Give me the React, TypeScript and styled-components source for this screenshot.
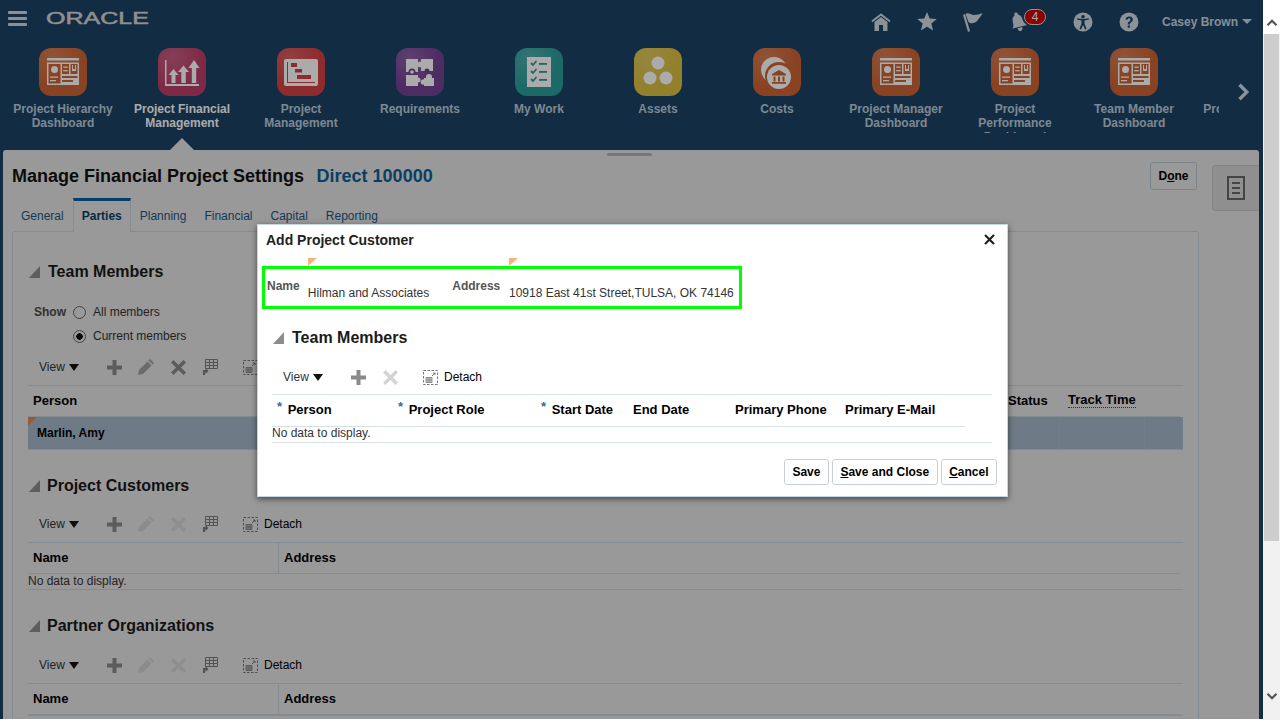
import React from "react";
import styled, { createGlobalStyle } from "styled-components";

const GlobalStyle = createGlobalStyle`
  html, body {
    margin: 0;
    padding: 0;
    background: #fff;
    overflow: hidden;
    font-family: "Liberation Sans", Arial, sans-serif;
    font-size: 12px;
    color: #000;
  }
  * { box-sizing: border-box; }
`;

const Shell = styled.div`
  display: flex;
  width: 1280px;
  height: 720px;
`;

const Page = styled.div`
  position: relative;
  flex: 0 0 1263px;
  height: 719px;
  overflow: hidden;
  background: #1b4265;
  display: flex;
  flex-direction: column;
`;

/* top bar */
const TopBar = styled.header`
  flex: 0 0 42px;
  display: flex;
  align-items: center;
  padding: 0 11px 0 8px;
`;

const Burger = styled.div`
  width: 19px;
  display: flex;
  flex-direction: column;
  gap: 3px;
  margin-top: -6px;

  span {
    height: 3px;
    border-radius: 1px;
    background: #d6d6d6;
  }
`;

const Logo = styled.svg`
  margin: -6px 0 0 19px;
`;

const TopIcons = styled.div`
  margin-left: auto;
  display: flex;
  align-items: center;
  margin-top: 1px;
`;

const IconSlot = styled.div<{ $wide?: boolean }>`
  position: relative;
  width: ${({ $wide }) => ($wide ? "64px" : "46px")};
  display: flex;
  justify-content: ${({ $wide }) => ($wide ? "flex-start" : "center")};
  padding-left: ${({ $wide }) => ($wide ? "14px" : "0")};
`;

const Badge = styled.span`
  position: absolute;
  left: 28px;
  top: -3px;
  width: 22px;
  height: 16px;
  border-radius: 8px;
  border: 1px solid #d8d8d8;
  background: #cf0000;
  color: #fff;
  font-size: 12px;
  line-height: 14px;
  text-align: center;
`;

const UserName = styled.div`
  margin-left: 10px;
  display: flex;
  align-items: center;
  gap: 4px;
  font-weight: bold;
  color: #c8d6e2;
`;

const Caret = styled.span<{ $color?: string }>`
  width: 0;
  height: 0;
  border-left: 5px solid transparent;
  border-right: 5px solid transparent;
  border-top: 5px solid ${({ $color }) => $color || "#c8d6e2"};
`;

/* springboard strip */
const NavRow = styled.nav`
  flex: 0 0 108px;
  display: flex;
  padding: 6px 0 0 3px;
`;

const NavClip = styled.div`
  width: 1216px;
  display: flex;
  overflow: hidden;
`;

const NavItem = styled.div<{ $active?: boolean }>`
  position: relative;
  flex: 0 0 120px;
  margin-right: -1px;
  display: flex;
  flex-direction: column;
  align-items: center;
  color: ${({ $active }) => ($active ? "#fff" : "#bccbd8")};

  ${({ $active }) =>
    $active &&
    `&::after {
      content: "";
      position: absolute;
      left: 48px;
      bottom: 0;
      border-left: 12px solid transparent;
      border-right: 12px solid transparent;
      border-bottom: 12px solid #e4e4e4;
    }`}
`;

const Tile = styled.div<{ $color: string }>`
  width: 48px;
  height: 48px;
  border-radius: 12px;
  background: radial-gradient(circle at 30% 20%, rgba(255, 255, 255, 0.16), transparent 58%),
    ${({ $color }) => $color};
`;

const NavLabel = styled.div`
  margin-top: 6px;
  max-width: 110px;
  height: 31px;
  overflow: hidden;
  text-align: center;
  font-weight: bold;
  font-size: 12px;
  line-height: 14px;
`;

const NavNext = styled.div`
  flex: 1;
  display: flex;
  justify-content: center;
  padding: 35px 0 0 6px;
`;

/* dimmed page */
const Panel = styled.main`
  flex: 1;
  min-height: 0;
  margin: 0 4px 0 3px;
  border-radius: 3px 3px 0 0;
  background: #e4e4e4;
  overflow: hidden;
`;

const Handle = styled.div`
  width: 45px;
  height: 3px;
  margin: 3px 0 0 604px;
  border-radius: 2px;
  background: #b2b2b2;
`;

const PanelBody = styled.div`
  display: flex;
  margin-top: 6px;
`;

const Content = styled.div`
  flex: 0 0 1196px;
  padding-left: 9px;
`;

const TitleRow = styled.div`
  height: 28px;
  display: flex;
  align-items: center;
  justify-content: space-between;
  padding-right: 2px;
`;

const PageTitle = styled.h1`
  margin: 0;
  font-size: 18px;
  font-weight: bold;
  color: #111;

  span {
    margin-left: 12.5px;
    color: #0f5d96;
  }
`;

const Button = styled.button<{ $tall?: boolean }>`
  height: ${({ $tall }) => ($tall ? "28px" : "26px")};
  padding: 0 7.5px;
  border: 1px solid #c5d0da;
  border-radius: 3px;
  background: #fff;
  font: bold 12px "Liberation Sans", Arial, sans-serif;
  color: #000;
`;

const DoneButton = styled(Button)`
  background: #e4e4e4;
  border-color: #b8c4cf;
`;

const Tabs = styled.div`
  height: 33px;
  margin-top: 8px;
  display: flex;
`;

const Tab = styled.div<{ $active?: boolean }>`
  height: ${({ $active }) => ($active ? "34px" : "33px")};
  padding: 8px 8px 0;
  font-size: 12px;
  position: relative;
  color: ${({ $active }) => ($active ? "#0b3f6b" : "#1c5686")};
  font-weight: ${({ $active }) => ($active ? "bold" : "normal")};
  background: ${({ $active }) => ($active ? "#e4e4e4" : "transparent")};
  border-top: 3px solid ${({ $active }) => ($active ? "#0c5aa0" : "transparent")};
  border-left: 1px solid ${({ $active }) => ($active ? "#c3d0dc" : "transparent")};
  border-right: 1px solid ${({ $active }) => ($active ? "#c3d0dc" : "transparent")};
`;

const TabBox = styled.div`
  height: 520px;
  padding: 30px 15px 0;
  border: 1px solid #c3d0dc;
  border-radius: 3px;
`;

const Heading = styled.div<{ $gap?: number; $tight?: boolean }>`
  display: flex;
  align-items: center;
  height: 20px;
  margin-top: ${({ $gap }) => $gap ?? 0}px;
  font-size: 16px;
  font-weight: bold;
  color: #1a1a1a;

  span {
    margin-right: ${({ $tight }) => ($tight ? "7px" : "8px")};
  }
`;

const Disclosure = styled.span`
  width: 11px;
  height: 12px;
  margin-left: 1px;
  background: #8c8c8c;
  clip-path: polygon(100% 0, 100% 100%, 0 100%);
`;

const ShowGroup = styled.div`
  display: grid;
  grid-template-columns: 39px auto;
  grid-auto-rows: 24px;
  width: 220px;
  margin: 18px 0 0 6px;
  align-items: center;
`;

const ShowLabel = styled.span`
  font-weight: bold;
  color: #4a4a4a;
`;

const RadioLine = styled.label`
  grid-column: 2;
  display: flex;
  align-items: center;
  gap: 7px;
  color: #333;
`;

const Radio = styled.span<{ $on?: boolean }>`
  width: 13px;
  height: 13px;
  border-radius: 50%;
  border: 1px solid #666;
  background: radial-gradient(circle, ${({ $on }) => ($on ? "#111 0 3px" : "transparent 0 3px")}, transparent 3.5px);
`;

const Toolbar = styled.div<{ $gap?: number }>`
  height: 36px;
  margin-top: ${({ $gap }) => $gap ?? 11}px;
  padding-left: 11px;
  display: flex;
  align-items: center;
`;

const ViewLabel = styled.span`
  width: 30px;
  color: #333;
`;

const ViewCaret = styled(Caret)`
  margin-right: 19px;
  border-left-width: 5.5px;
  border-right-width: 5.5px;
  border-top-width: 7px;
`;

const ToolSlot = styled.span`
  width: 32px;
  height: 18px;
  display: flex;
  align-items: center;
  justify-content: center;
`;

const Detach = styled.span`
  margin-left: 17px;
  display: flex;
  align-items: center;
  gap: 6px;
  color: #000;
`;

const Table = styled.div`
  border-top: 1px solid #c3d0dc;
  border-bottom: 1px solid #c3d0dc;
`;

const HeadRow = styled.div<{ $cols: string; $inset?: number }>`
  display: grid;
  grid-template-columns: ${({ $cols }) => $cols};
  height: 31px;
  margin-right: ${({ $inset }) => $inset ?? 3}px;
  border-bottom: 1px solid #c3d0dc;
`;

const HeadCell = styled.div<{ $sep?: boolean }>`
  display: flex;
  align-items: center;
  padding: 0 0 2px 5px;
  font-size: 13px;
  font-weight: bold;
  color: #000;
  white-space: nowrap;
  border-right: 1px solid ${({ $sep }) => ($sep ? "#c3d0dc" : "transparent")};
`;

const TrackTime = styled.span`
  border-bottom: 1px dotted #444;
`;

const SelectedRow = styled.div`
  position: relative;
  display: grid;
  grid-template-columns: 1032px 85px 1fr;
  height: 32px;
  background: #a4b8ca;
  font-weight: bold;
  font-size: 12px;

  &::before {
    content: "";
    position: absolute;
    left: 0;
    top: 0;
    border-top: 9px solid #e28a50;
    border-right: 9px solid transparent;
  }
`;

const RowCell = styled.div`
  display: flex;
  align-items: center;
  padding: 0 0 1px 9px;
  border-right: 1px solid #abbdce;
`;

const NoData = styled.div`
  height: 15px;
  line-height: 14px;
  font-size: 12px;
  color: #333;
`;

const SideRail = styled.aside`
  flex: 1;
  padding: 3px 0 0 13px;
`;

const SideTab = styled.div`
  height: 46px;
  display: flex;
  align-items: center;
  justify-content: center;
  background: #d6d6d6;
  border: 1px solid #c4c4c4;
  border-right: none;
  border-radius: 4px 0 0 4px;
`;

/* modal */
const Overlay = styled.div`
  position: absolute;
  inset: 0;
  background: rgba(0, 0, 0, 0.33);
`;

const Dialog = styled.section`
  position: absolute;
  left: 257px;
  top: 224px;
  width: 751px;
  height: 273px;
  background: #fff;
  border: 1px solid #c6d6e3;
  box-shadow: 0 2px 6px rgba(0, 0, 0, 0.55);
`;

const DialogHead = styled.div`
  height: 29px;
  padding: 0 12px 0 8px;
  display: flex;
  align-items: center;
  justify-content: space-between;
  font-size: 14px;
  font-weight: bold;
  color: #222;
`;

const CustomerBox = styled.div`
  width: 480px;
  height: 43px;
  margin: 12px 0 0 4px;
  padding-left: 2px;
  border: 3px solid #00ff00;
  display: flex;
`;

const FieldLabel = styled.span<{ $width: number }>`
  width: ${({ $width }) => $width}px;
  padding-top: 10px;
  font-weight: bold;
  color: #555;
`;

const FieldValue = styled.span<{ $width: number }>`
  position: relative;
  width: ${({ $width }) => $width}px;
  padding-top: 17px;
  color: #333;
  white-space: nowrap;

  &::before {
    content: "";
    position: absolute;
    left: 0;
    top: -11px;
    border-top: 8px solid #fdb07a;
    border-right: 9px solid transparent;
  }
`;

const DialogBody = styled.div`
  padding: 19px 15px 0 14px;
`;

const Required = styled.span`
  margin-right: 5.6px;
  color: #2a6eb0;
  font-size: 13px;
  position: relative;
  top: -3px;
`;

const DialogTable = styled(Table)`
  margin-top: -1px;
  border-color: #d6dfe6;
`;

const DialogHeadRow = styled(HeadRow)`
  height: 32px;
  border-color: #d6dfe6;
`;

const DialogNoData = styled(NoData)`
  height: 15px;
  line-height: 13px;
`;

const DialogFoot = styled.div`
  display: flex;
  justify-content: flex-end;
  gap: 3px;
  margin-top: 16px;
  padding-right: 10px;
`;

/* scrollbar */
const ScrollBar = styled.div`
  flex: 1;
  background: #f1f1f1;
  display: flex;
  flex-direction: column;
`;

const ScrollButton = styled.div<{ $top?: boolean }>`
  height: ${({ $top }) => ($top ? "34px" : "auto")};
  margin-top: ${({ $top }) => ($top ? "0" : "auto")};
  padding: ${({ $top }) => ($top ? "17px 0 0" : "0 0 18px")};
  background: ${({ $top }) => ($top ? "#fff" : "transparent")};
  display: flex;
  justify-content: center;
`;

const ScrollThumb = styled.div`
  height: 507px;
  margin: 0 1px;
  background: #cdcdcd;
`;

/* drawings */
const G = "#fff";

const DashboardGlyph = ({ c }: { c: string }) => (
  <svg width="48" height="48" viewBox="0 0 48 48">
    <rect x="8" y="10" width="32" height="2.5" fill={G} />
    <rect x="8" y="14.5" width="32" height="22.5" fill={G} />
    <rect x="9.5" y="16" width="12" height="19.5" fill={c} />
    <circle cx="15.5" cy="21.5" r="3.5" fill={G} />
    <rect x="11" y="28.5" width="8" height="1.3" fill={G} />
    <rect x="11" y="32" width="6" height="1.3" fill={G} />
    <rect x="23" y="16" width="7" height="10" fill={c} />
    <rect x="24.2" y="18.5" width="4.6" height="1.3" fill={G} />
    <rect x="24.2" y="22" width="4.6" height="1.3" fill={G} />
    <rect x="31.5" y="16" width="7" height="10" fill={c} />
    <path d="M33 17v6h4v-6h-1v4h-2v-4z" fill={G} />
    <rect x="23" y="28" width="15.5" height="2" fill={c} />
    <rect x="23" y="32" width="11" height="2" fill={c} />
  </svg>
);

const FinancialGlyph = () => (
  <svg width="48" height="48" viewBox="0 0 48 48">
    <path d="M7 12h1.500v24H41v2H7z" fill={G} />
    <path d="M10.500 27l5-6 5 6h-3v8h-4v-8z" fill={G} />
    <path d="M20 24l5.500-6.500L31 24h-3.200v11h-4.500V24z" fill={G} />
    <path d="M30.500 20l5.500-8 5.500 8h-3.300v15h-4.400V20z" fill={G} />
  </svg>
);

const GanttGlyph = ({ c }: { c: string }) => (
  <svg width="48" height="48" viewBox="0 0 48 48">
    <rect x="7" y="11" width="34" height="27" rx="2" fill={G} />
    <path d="M10 14h1v20h27v1H10z" fill={c} />
    <rect x="14" y="15" width="6" height="4" fill={c} />
    <rect x="18" y="21" width="7" height="3.5" fill={c} />
    <rect x="20" y="27" width="14" height="4" fill={c} />
  </svg>
);

const PuzzleGlyph = ({ c }: { c: string }) => (
  <svg width="48" height="48" viewBox="0 0 48 48">
    <rect x="10" y="11" width="12" height="13" fill={G} />
    <circle cx="16" cy="24" r="3.5" fill={c} />
    <circle cx="16" cy="24" r="1.8" fill={G} />
    <rect x="25" y="11" width="12" height="12" fill={G} />
    <circle cx="24.500" cy="16.500" r="3" fill={G} />
    <circle cx="31" cy="23" r="2.500" fill={c} />
    <rect x="10" y="27" width="12" height="11" fill={G} />
    <circle cx="22" cy="32" r="2.500" fill={G} />
    <rect x="28" y="30" width="10" height="8" fill={G} />
    <circle cx="33" cy="29" r="3" fill={G} />
    <circle cx="27.500" cy="34" r="2.800" fill={G} />
  </svg>
);

const ChecklistGlyph = ({ c }: { c: string }) => (
  <svg width="48" height="48" viewBox="0 0 48 48">
    <rect x="12" y="9" width="24" height="30" fill={G} />
    {[15, 23, 31].map((y) => (
      <g key={y}>
        <path d={`M16 ${y}l2 2 3.5-4`} stroke={c} strokeWidth="1.8" fill="none" />
        <rect x="24" y={y} width="8" height="1.8" fill={c} />
      </g>
    ))}
  </svg>
);

const AssetsGlyph = () => (
  <svg width="48" height="48" viewBox="0 0 48 48">
    <circle cx="24" cy="15" r="6.5" fill={G} />
    <circle cx="16" cy="30" r="6.5" fill={G} />
    <circle cx="32" cy="30" r="6.5" fill={G} />
  </svg>
);

const CostsGlyph = ({ c }: { c: string }) => (
  <svg width="48" height="48" viewBox="0 0 48 48">
    <circle cx="21" cy="22" r="13" fill={G} />
    <circle cx="26" cy="28" r="14" fill={c} />
    <circle cx="26" cy="29" r="12" fill={G} />
    <path d="M26 22l7 4v1.5H19V26z" fill={c} />
    <rect x="20.5" y="28.5" width="2" height="5" fill={c} />
    <rect x="25" y="28.5" width="2" height="5" fill={c} />
    <rect x="29.5" y="28.5" width="2" height="5" fill={c} />
    <rect x="19" y="34" width="14" height="1.8" fill={c} />
  </svg>
);

const ORANGE = "#ce6433";

const navItems = [
  { label: "Project Hierarchy Dashboard", color: ORANGE, glyph: <DashboardGlyph c={ORANGE} /> },
  { label: "Project Financial Management", color: "#bd3f69", glyph: <FinancialGlyph />, active: true },
  { label: "Project Management", color: "#d44042", glyph: <GanttGlyph c="#d44042" /> },
  { label: "Requirements", color: "#744295", glyph: <PuzzleGlyph c="#744295" /> },
  { label: "My Work", color: "#2a9e9b", glyph: <ChecklistGlyph c="#2a9e9b" /> },
  { label: "Assets", color: "#dabf3f", glyph: <AssetsGlyph /> },
  { label: "Costs", color: ORANGE, glyph: <CostsGlyph c={ORANGE} /> },
  { label: "Project Manager Dashboard", color: ORANGE, glyph: <DashboardGlyph c={ORANGE} /> },
  { label: "Project Performance Dashboard", color: ORANGE, glyph: <DashboardGlyph c={ORANGE} /> },
  { label: "Team Member Dashboard", color: ORANGE, glyph: <DashboardGlyph c={ORANGE} /> },
  { label: "Project Hierarchy Dashboard", color: ORANGE, glyph: <DashboardGlyph c={ORANGE} /> },
];

const ICON = "#cfdbe4";

const HomeIcon = () => (
  <svg width="20" height="18" viewBox="0 0 20 18">
    <path d="M1 8.500L10 1.500l9 7" fill="none" stroke={ICON} strokeWidth="2" />
    <path d="M3.500 9L10 4l6.500 5v9H12v-6H8v6H3.500z" fill={ICON} />
  </svg>
);

const StarIcon = () => (
  <svg width="20" height="19" viewBox="0 0 20 19">
    <path d="M10 0l2.700 6.600 7.100.5-5.500 4.500 1.800 7L10 14.800l-6.100 3.800 1.800-7L.2 7.100l7.100-.5z" fill={ICON} />
  </svg>
);

const FlagIcon = () => (
  <svg width="20" height="20" viewBox="0 0 20 20">
    <path d="M0 3l2-1 5 17-2 1z" fill={ICON} />
    <path d="M2.500 2C5 0 8 3 11 3c3 0 6-1 8.500-2-1 3-3.500 5-5 7.500-2 2.500-5 3-7.500 2.500L5.500 10z" fill={ICON} />
  </svg>
);

const BellIcon = () => (
  <svg width="17" height="20" viewBox="0 0 17 20">
    <g transform="rotate(-14 8 10)">
      <circle cx="8" cy="2" r="1.800" fill={ICON} />
      <path d="M8 2.500c3.500 0 5 3 5 6 0 3 1 4.500 3 6.500H1c2-2 2-3.500 2-6.500 0-3 1.500-6 5-6z" fill={ICON} />
      <path d="M6 16h5c0 2-1 3.500-2.500 3.500S6 18 6 16z" fill={ICON} />
    </g>
  </svg>
);

const AccessIcon = () => (
  <svg width="20" height="20" viewBox="0 0 20 20">
    <circle cx="10" cy="10" r="9.500" fill={ICON} />
    <circle cx="10" cy="4.800" r="1.800" fill="#1b4265" />
    <path d="M4 7.500l4.500 1v3L6.500 17l1.400.5L10 13l2.100 4.500 1.400-.5-2-5.500v-3l4.500-1-.3-1.200c-3.800 1-7.600 1-11.400 0z" fill="#1b4265" />
  </svg>
);

const HelpIcon = () => (
  <svg width="20" height="20" viewBox="0 0 20 20">
    <circle cx="10" cy="10" r="9.500" fill={ICON} />
    <path d="M6.500 7.500C6.800 5.500 8.200 4.500 10.200 4.500c2.200 0 3.600 1.200 3.600 3 0 1.500-.9 2.200-1.900 2.900-.8.600-1.100 1-1.100 2H8.700c0-1.600.5-2.300 1.500-3 .8-.6 1.300-1 1.300-1.800 0-.8-.6-1.300-1.400-1.300-.9 0-1.400.5-1.600 1.500z" fill="#1b4265" />
    <rect x="8.700" y="13.500" width="2.200" height="2.200" fill="#1b4265" />
  </svg>
);

const Chevron = ({ dir, color, size }: { dir: "up" | "down" | "right"; color: string; size: number }) => {
  const d = dir === "right" ? "M4 1.500l6.500 6.500L4 14.500" : dir === "up" ? "M2 11l6-6 6 6" : "M2 5l6 6 6-6";
  return (
    <svg width={size} height={size} viewBox="0 0 16 16">
      <path d={d} fill="none" stroke={color} strokeWidth="3" />
    </svg>
  );
};

const PlusIcon = () => (
  <svg width="15" height="15" viewBox="0 0 15 15">
    <path d="M5.500 0h4v5.500H15v4H9.500V15h-4V9.500H0v-4h5.500z" fill="#8a8a8a" />
  </svg>
);

const PencilIcon = ({ off }: { off?: boolean }) => (
  <svg width="16" height="16" viewBox="0 0 16 16">
    <path d="M12 0l4 4-1.500 1.500-4-4zM9.500 2.500l4 4L5 15l-5 1 1-5z" fill={off ? "#d0d0d0" : "#a0a0a0"} />
  </svg>
);

const CrossIcon = ({ off }: { off?: boolean }) => (
  <svg width="15" height="15" viewBox="0 0 15 15">
    <path d="M2.500 0l5 5 5-5L15 2.500l-5 5 5 5-2.500 2.500-5-5-5 5L0 12.500l5-5-5-5z" fill={off ? "#d4d4d4" : "#8a8a8a"} />
  </svg>
);

const FreezeIcon = () => (
  <svg width="16" height="16" viewBox="0 0 16 16">
    <path d="M3.500.5h12v9h-12zM3.500 3.500h12M3.500 6.500h12M7.500.5v9M11.500.5v9" fill="none" stroke="#7c7c7c" />
    <path d="M1 16v-5h2.500V9l3 3-3 3v-2H3v3z" fill="#7c7c7c" />
  </svg>
);

const DetachIcon = () => (
  <svg width="15" height="15" viewBox="0 0 15 15">
    <rect x=".5" y=".5" width="14" height="14" fill="none" stroke="#777" strokeDasharray="2.500 1.500" />
    <path d="M3 7.500h6v5H3zM3 9.200h6M3 10.900h6M5 7.500v5M7 7.500v5" fill="none" stroke="#777" strokeWidth=".8" />
    <path d="M9 6l3-3M10 3h2v2" fill="none" stroke="#777" />
  </svg>
);

const DocIcon = () => (
  <svg width="18" height="24" viewBox="0 0 18 24">
    <rect x="1" y="1" width="16" height="22" fill="none" stroke="#666" strokeWidth="2" />
    <path d="M5 7h8M5 12h8M5 17h8" stroke="#666" strokeWidth="2" />
  </svg>
);

const CloseIcon = () => (
  <svg width="11" height="11" viewBox="0 0 11 11">
    <path d="M1 1l9 9M10 1l-9 9" stroke="#222" strokeWidth="2.200" />
  </svg>
);

const TableTools = ({ pencil, freeze, off, gap }: { pencil?: boolean; freeze?: boolean; off?: boolean; gap?: number }) => (
  <Toolbar $gap={gap}>
    <ViewLabel>View</ViewLabel>
    <ViewCaret $color="#111" />
    <ToolSlot><PlusIcon /></ToolSlot>
    {pencil && <ToolSlot><PencilIcon off={off} /></ToolSlot>}
    <ToolSlot><CrossIcon off={off} /></ToolSlot>
    {freeze && <ToolSlot><FreezeIcon /></ToolSlot>}
    <Detach><DetachIcon />Detach</Detach>
  </Toolbar>
);

const NameAddressTable = ({ empty }: { empty?: boolean }) => (
  <Table>
    <HeadRow $cols="251px 1fr">
      <HeadCell $sep>Name</HeadCell>
      <HeadCell>Address</HeadCell>
    </HeadRow>
    {empty && <NoData>No data to display.</NoData>}
  </Table>
);

const App = () => (
  <Shell>
    <GlobalStyle />
    <Page>
      <TopBar>
        <Burger><span /><span /><span /></Burger>
        <Logo width="104" height="14" viewBox="0 0 104 14">
          <text x="0" y="13" fontSize="17" fontFamily="Liberation Sans" fill="#d6d6d6" stroke="#d6d6d6" strokeWidth="0.5" textLength="103" lengthAdjust="spacingAndGlyphs">ORACLE</text>
        </Logo>
        <TopIcons>
          <IconSlot><HomeIcon /></IconSlot>
          <IconSlot><StarIcon /></IconSlot>
          <IconSlot><FlagIcon /></IconSlot>
          <IconSlot $wide><BellIcon /><Badge>4</Badge></IconSlot>
          <IconSlot><AccessIcon /></IconSlot>
          <IconSlot><HelpIcon /></IconSlot>
          <UserName>Casey Brown <Caret /></UserName>
        </TopIcons>
      </TopBar>

      <NavRow>
        <NavClip>
          {navItems.map((item, i) => (
            <NavItem key={i} $active={item.active}>
              <Tile $color={item.color}>{item.glyph}</Tile>
              <NavLabel>{item.label}</NavLabel>
            </NavItem>
          ))}
        </NavClip>
        <NavNext><Chevron dir="right" color="#cfdbe4" size={18} /></NavNext>
      </NavRow>

      <Panel>
        <Handle />
        <PanelBody>
          <Content>
            <TitleRow>
              <PageTitle>Manage Financial Project Settings<span>Direct 100000</span></PageTitle>
              <DoneButton $tall>D<u>o</u>ne</DoneButton>
            </TitleRow>
            <Tabs>
              <Tab>General</Tab>
              <Tab $active>Parties</Tab>
              <Tab>Planning</Tab>
              <Tab>Financial</Tab>
              <Tab>Capital</Tab>
              <Tab>Reporting</Tab>
            </Tabs>
            <TabBox>
              <Heading><Disclosure />Team Members</Heading>
              <ShowGroup>
                <ShowLabel>Show</ShowLabel>
                <RadioLine><Radio />All members</RadioLine>
                <RadioLine><Radio $on />Current members</RadioLine>
              </ShowGroup>
              <TableTools pencil freeze gap={1} />
              <Table>
                <HeadRow $cols="975px 60px 1fr">
                  <HeadCell>Person</HeadCell>
                  <HeadCell>Status</HeadCell>
                  <HeadCell><TrackTime>Track Time</TrackTime></HeadCell>
                </HeadRow>
                <SelectedRow>
                  <RowCell>Marlin, Amy</RowCell>
                  <RowCell />
                  <RowCell />
                </SelectedRow>
              </Table>

              <Heading $gap={26} $tight><Disclosure />Project Customers</Heading>
              <TableTools pencil freeze off gap={10} />
              <NameAddressTable empty />

              <Heading $gap={26} $tight><Disclosure />Partner Organizations</Heading>
              <TableTools pencil freeze off />
              <NameAddressTable />
            </TabBox>
          </Content>
          <SideRail>
            <SideTab><DocIcon /></SideTab>
          </SideRail>
        </PanelBody>
      </Panel>

      <Overlay>
        <Dialog>
          <DialogHead>
            Add Project Customer
            <CloseIcon />
          </DialogHead>
          <CustomerBox>
            <FieldLabel $width={41}>Name</FieldLabel>
            <FieldValue $width={145}>Hilman and Associates</FieldValue>
            <FieldLabel $width={57}>Address</FieldLabel>
            <FieldValue $width={231}>10918 East 41st Street,TULSA, OK 74146</FieldValue>
          </CustomerBox>
          <DialogBody>
            <Heading><Disclosure />Team Members</Heading>
            <TableTools off />
            <DialogTable>
              <DialogHeadRow $cols="121px 143px 92px 102px 110px 125px" $inset={27}>
                <HeadCell><Required>*</Required>Person</HeadCell>
                <HeadCell><Required>*</Required>Project Role</HeadCell>
                <HeadCell><Required>*</Required>Start Date</HeadCell>
                <HeadCell>End Date</HeadCell>
                <HeadCell>Primary Phone</HeadCell>
                <HeadCell>Primary E-Mail</HeadCell>
              </DialogHeadRow>
              <DialogNoData>No data to display.</DialogNoData>
            </DialogTable>
          </DialogBody>
          <DialogFoot>
            <Button>Save</Button>
            <Button><u>S</u>ave and Close</Button>
            <Button><u>C</u>ancel</Button>
          </DialogFoot>
        </Dialog>
      </Overlay>
    </Page>

    <ScrollBar>
      <ScrollButton $top><Chevron dir="up" color="#555" size={12} /></ScrollButton>
      <ScrollThumb />
      <ScrollButton><Chevron dir="down" color="#555" size={12} /></ScrollButton>
    </ScrollBar>
  </Shell>
);

export default App;
